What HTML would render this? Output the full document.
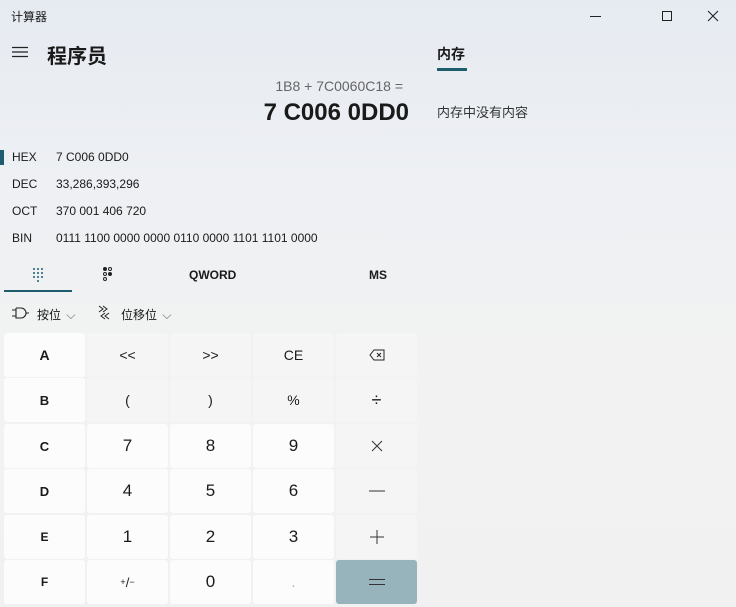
<!DOCTYPE html>
<html><head><meta charset="utf-8"><style>
*{margin:0;padding:0;box-sizing:border-box}
body{width:736px;height:607px;overflow:hidden;position:relative;font-family:"Liberation Sans","Noto Sans CJK SC",sans-serif;color:#1a1a1a;background:linear-gradient(180deg,#e6ebf2 0%,#eef0f3 30%,#f2f2f2 60%,#f1f1f1 100%)}
.a{position:absolute;white-space:nowrap}
.b{position:absolute;width:81px;height:44px;display:flex;align-items:center;justify-content:center;font-size:14px;border-radius:3px}
.w{background:#fcfcfc}.g{background:#f5f5f5}
.n{font-size:17px}
</style></head><body>
<div class="a" style="left:11px;top:8px;font-size:12px">计算器</div>
<div class="a" style="left:590px;top:16px;width:11px;height:1px;background:#222"></div>
<div class="a" style="left:662px;top:11px;width:10px;height:10px;border:1px solid #222"></div>
<svg class="a" style="left:707px;top:10px" width="12" height="12"><path d="M1 1L11 11M11 1L1 11" stroke="#222" stroke-width="1.1"/></svg>
<svg class="a" style="left:12px;top:46px" width="16" height="12"><path d="M0 1.5H16M0 6H16M0 10.5H16" stroke="#222" stroke-width="1.2"/></svg>
<div class="a" style="left:47px;top:40px;font-size:20px;font-weight:bold">程序员</div>
<div class="a" style="right:333px;top:78px;font-size:14px;color:#666">1B8 + 7C0060C18 =</div>
<div class="a" style="right:327px;top:99px;font-size:24px;font-weight:bold">7 C006 0DD0</div>
<div class="a" style="left:437px;top:44px;font-size:14px;font-weight:bold">内存</div>
<div class="a" style="left:437px;top:68px;width:30px;height:3px;background:#1e5d6e"></div>
<div class="a" style="left:437px;top:102px;font-size:13px;color:#333">内存中没有内容</div>
<div class="a" style="left:0;top:150px;width:4px;height:15px;background:#1e5d6e"></div>
<div class="a" style="left:12px;top:151px;font-size:12px;line-height:13.5px">HEX<br><br>DEC<br><br>OCT<br><br>BIN</div>
<div class="a" style="left:56px;top:151px;font-size:12px;line-height:13.5px">7 C006 0DD0<br><br>33,286,393,296<br><br>370 001 406 720<br><br>0111 1100 0000 0000 0110 0000 1101 1101 0000</div>
<div class="a" style="left:4px;top:290px;width:68px;height:2px;background:#1e5d6e"></div>
<svg class="a" style="left:32px;top:268px" width="12" height="14"><g fill="#1e5d6e"><circle cx="2" cy="1" r="1"/><circle cx="6" cy="1" r="1"/><circle cx="10" cy="1" r="1"/><circle cx="2" cy="5" r="1"/><circle cx="6" cy="5" r="1"/><circle cx="10" cy="5" r="1"/><circle cx="2" cy="9" r="1"/><circle cx="6" cy="9" r="1"/><circle cx="10" cy="9" r="1"/><circle cx="6" cy="13" r="1"/></g></svg>
<svg class="a" style="left:102px;top:267px" width="12" height="14"><g fill="none" stroke="#222"><circle cx="3" cy="2" r="1.5" fill="#222"/><circle cx="8" cy="2" r="1.5"/><circle cx="3" cy="7" r="1.5"/><circle cx="8" cy="7" r="1.5" fill="#222"/><circle cx="3" cy="12" r="1.5"/></g></svg>
<div class="a" style="left:189px;top:268px;font-size:12px;font-weight:bold">QWORD</div>
<div class="a" style="left:369px;top:268px;font-size:12px;font-weight:bold">MS</div>
<svg class="a" style="left:12px;top:307px" width="20" height="12"><path d="M0 3H4M0 9H4M4 1V11H9A5 5 0 0 0 9 1H4M14 6H17" stroke="#222" fill="none" stroke-width="1.1"/></svg>
<div class="a" style="left:37px;top:306px;font-size:12px">按位 <span style="color:#666;margin-left:2px">⌵</span></div>
<svg class="a" style="left:97px;top:305px" width="14" height="16"><path d="M2 1L6 4L2 7M6 1L10 4L6 7M12 8L8 11L12 14M8 8L4 11L8 14" stroke="#222" fill="none"/></svg>
<div class="a" style="left:121px;top:306px;font-size:12px">位移位 <span style="color:#666;margin-left:2px">⌵</span></div>

<div class="b w" style="left:4px;top:333px;font-weight:bold">A</div>
<div class="b g" style="left:87px;top:333px">&lt;&lt;</div>
<div class="b g" style="left:170px;top:333px">&gt;&gt;</div>
<div class="b g" style="left:253px;top:333px">CE</div>
<div class="b g" style="left:336px;top:333px"><svg width="16" height="12"><path d="M5 1H15V11H5L1 6Z" fill="none" stroke="#222"/><path d="M8 4L12 8M12 4L8 8" stroke="#222"/></svg></div>

<div class="b w" style="left:4px;top:378px;font-weight:bold;font-size:13px">B</div>
<div class="b g" style="left:87px;top:378px">(</div>
<div class="b g" style="left:170px;top:378px">)</div>
<div class="b g" style="left:253px;top:378px">%</div>
<div class="b g" style="left:336px;top:378px;font-size:18px">÷</div>

<div class="b w" style="left:4px;top:424px;font-weight:bold;font-size:13px">C</div>
<div class="b w n" style="left:87px;top:424px">7</div>
<div class="b w n" style="left:170px;top:424px">8</div>
<div class="b w n" style="left:253px;top:424px">9</div>
<div class="b g" style="left:336px;top:424px"><svg width="12" height="12"><path d="M1 1L11 11M11 1L1 11" stroke="#333"/></svg></div>

<div class="b w" style="left:4px;top:469px;font-weight:bold;font-size:13px">D</div>
<div class="b w n" style="left:87px;top:469px">4</div>
<div class="b w n" style="left:170px;top:469px">5</div>
<div class="b w n" style="left:253px;top:469px">6</div>
<div class="b g" style="left:336px;top:469px"><svg width="16" height="2"><path d="M0 1H16" stroke="#333"/></svg></div>

<div class="b w" style="left:4px;top:515px;font-weight:bold;font-size:12px">E</div>
<div class="b w n" style="left:87px;top:515px">1</div>
<div class="b w n" style="left:170px;top:515px">2</div>
<div class="b w n" style="left:253px;top:515px">3</div>
<div class="b g" style="left:336px;top:515px"><svg width="14" height="14"><path d="M0 7H14M7 0V14" stroke="#333"/></svg></div>

<div class="b w" style="left:4px;top:560px;font-weight:bold;font-size:12px">F</div>
<div class="b w" style="left:87px;top:560px;font-size:13px"><sup style="font-size:9px">+</sup>/<sub style="font-size:9px">−</sub></div>
<div class="b w n" style="left:170px;top:560px">0</div>
<div class="b w" style="left:253px;top:560px;color:#aaa">.</div>
<div class="b" style="left:336px;top:560px;background:#97b3bc"><svg width="16" height="8"><path d="M0 1.5H16M0 6.5H16" stroke="#333"/></svg></div>
</body></html>
